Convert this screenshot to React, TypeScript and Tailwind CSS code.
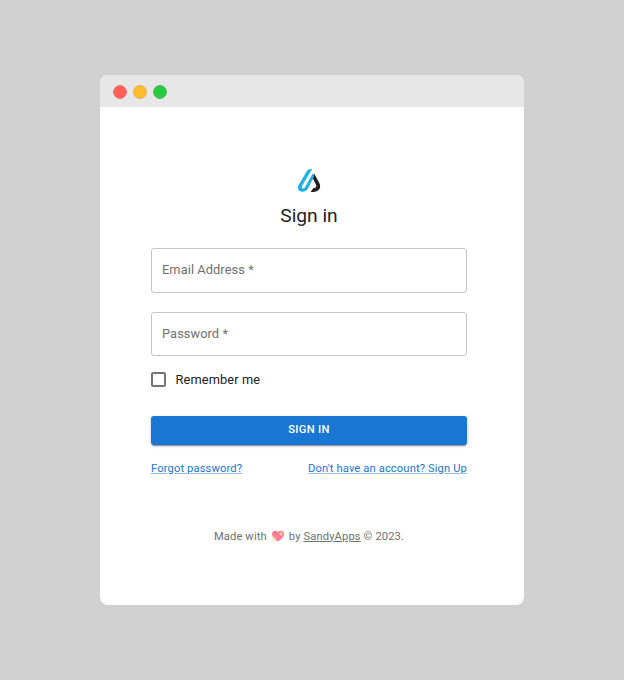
import React from "react";

function Logo() {
  return (
    <svg className="block h-6 w-6" viewBox="0 0 24 24" fill="none">
      <path d="M17.1 5.6 L22.2 14.8 C25 19.8 21.3 23.9 16.4 23.9 H13.6 L16.4 20 C19 20.1 20 18.5 18.8 16.2 L15.4 9.8 Z" fill="#231f20" />
      <path d="M9.6 3.4 Q11 1 14.2 1 H15.2 L5.2 17.6 C3.9 20.2 6.6 21.7 8.1 19 L15.6 5.4 L17 8.6 L11.2 20.2 C7.6 26.3 -1.2 23.6 1.4 17.6 Z" fill="#1fb0e6" />
    </svg>
  );
}

function Heart() {
  return (
    <svg className="mx-[5px] mb-[2px] block h-[12px] w-[12px] overflow-visible" viewBox="0 0 12 12">
      <path d="M6 11.6 C4 10 0 7.4 0 4 C0 .4 4.2 -.1 6 2.3 C7.8 -.1 12 .4 12 4 C12 7.4 8 10 6 11.6Z" fill="#ff7d9b" />
      <path d="M9 1.4 L9.8 3 L11.4 3.8 L9.8 4.6 L9 6.2 L8.2 4.6 L6.6 3.8 L8.2 3Z M2.4 6.2 L3.2 7.8 L4.8 8.6 L3.2 9.4 L2.4 11 L1.6 9.4 L0 8.6 L1.6 7.8Z" fill="#ffdc83" />
    </svg>
  );
}

function Field({ label, className }: { label: string; className: string }) {
  return (
    <div className={`${className} flex w-full items-center rounded-[3px] border border-[#c4c4c4] pl-[10px] text-[12.8px] leading-none tracking-[0.08px] text-[#707070]`}>
      {label}
    </div>
  );
}

export default function App() {
  return (
    <main className="flex h-[680px] w-[624px] items-center justify-center bg-[#d0d0d0] font-['Roboto',sans-serif]">
      <section className="h-[530px] w-[424px] overflow-hidden rounded-[8px] bg-white">
        <header className="flex h-8 items-center gap-[6px] bg-[#e7e7e7] pt-[2px] pl-[13px]">
          <span className="h-[14px] w-[14px] rounded-full border border-[#ea7a72] bg-[#ff5f57]" />
          <span className="h-[14px] w-[14px] rounded-full border border-[#e4b35c] bg-[#ffbd2e]" />
          <span className="h-[14px] w-[14px] rounded-full border border-[#54bd63] bg-[#27c93f]" />
        </header>
        <div className="ml-[51px] flex w-[316px] flex-col items-center pt-[61px] text-[#212121]">
          <Logo />
          <h1 className="mt-[11px] text-[19.2px] leading-[26px]">Sign in</h1>
          <Field label="Email Address *" className="mt-[19px] h-[45px]" />
          <Field label="Password *" className="mt-[19px] h-[44px]" />
          <label className="mt-4 flex h-4 w-full items-center gap-[9.5px] text-[12.8px] tracking-[0.12px]">
            <span className="mb-px h-[15px] w-[15px] rounded-[2px] border-2 border-[#757575]" />
            Remember me
          </label>
          <button className="mt-7 flex h-[29px] w-full items-center justify-center rounded-[3px] bg-[#1976d2] pb-[2px] text-[11.2px] leading-none font-medium tracking-[0.32px] text-white shadow-[0_2px_1px_-1px_rgba(0,0,0,.3),0_1px_3px_rgba(0,0,0,.28)]">
            SIGN IN
          </button>
          <nav className="mt-4 flex h-4 w-full items-center justify-between text-[11.2px] tracking-[0.12px] text-[#2474d0]">
            <a className="underline decoration-[#91bce8]">Forgot password?</a>
            <a className="underline decoration-[#91bce8]">Don't have an account? Sign Up</a>
          </nav>
          <footer className="mt-[52px] flex h-4 items-center text-[11.2px] tracking-[0.12px] text-[#707070]">
            <span>Made with</span>
            <Heart />
            <span>by <a className="underline">SandyApps</a> © 2023.</span>
          </footer>
        </div>
      </section>
    </main>
  );
}
